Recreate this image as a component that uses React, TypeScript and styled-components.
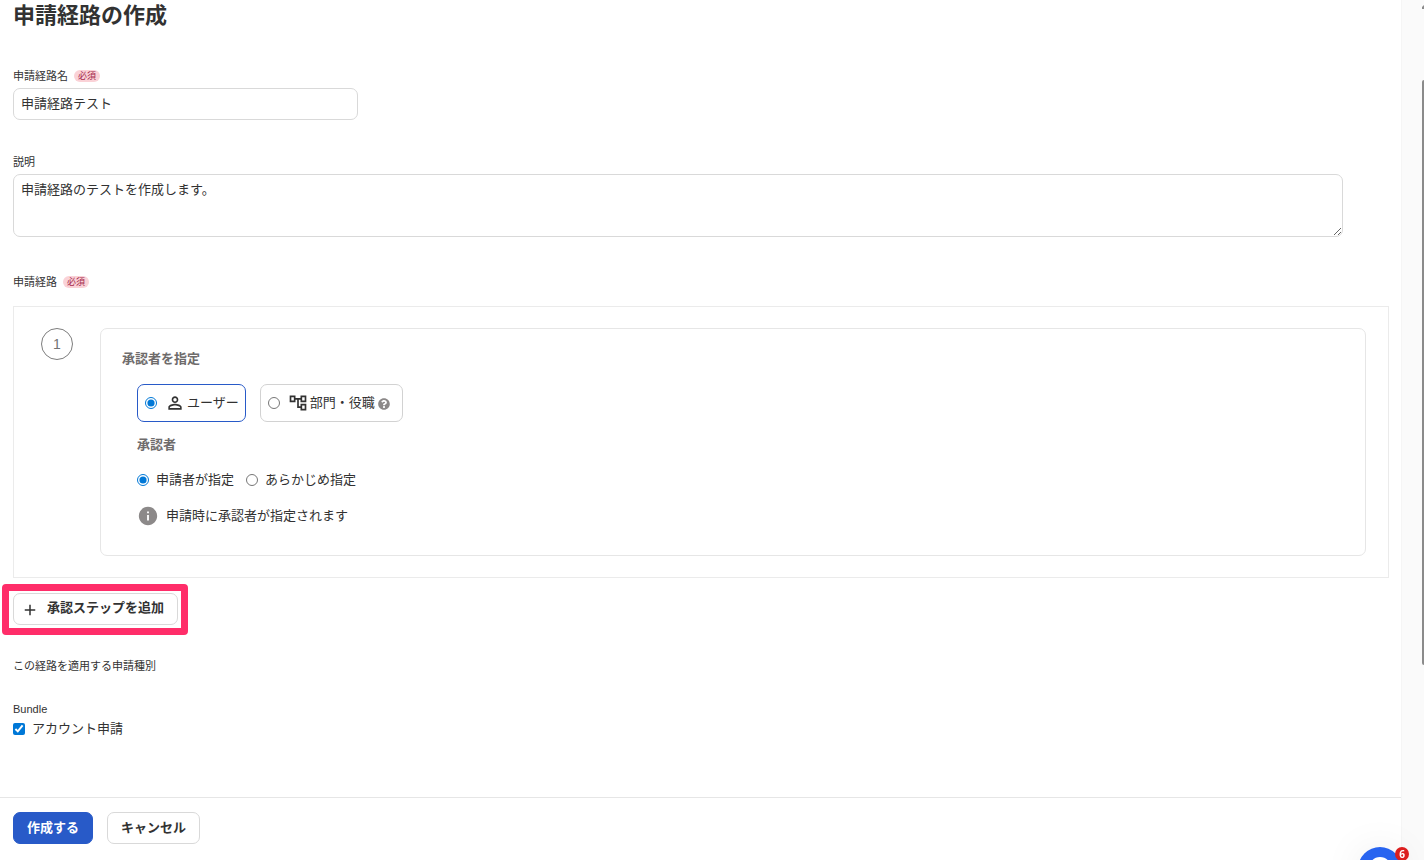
import React, { useState } from "react";
import styled, { createGlobalStyle } from "styled-components";
import { MdAdd, MdInfo, MdOutlineAccountTree, MdPersonOutline } from "react-icons/md";
import { FaQuestionCircle } from "react-icons/fa";

const GlobalStyle = createGlobalStyle`
  * { box-sizing: border-box; }
  body {
    margin: 0;
    background: #ffffff;
    color: #323232;
    font-family: "Liberation Sans", "Noto Sans CJK JP", sans-serif;
    font-size: 13px;
    line-height: 20px;
  }
  button, input, textarea { font: inherit; color: inherit; }
`;

const Page = styled.div`
  display: flex;
  min-height: 100vh;
`;

const Column = styled.div`
  flex: 1;
  min-width: 0;
  display: flex;
  flex-direction: column;
`;

const Form = styled.form`
  flex: 1;
  display: flex;
  flex-direction: column;
`;

const Content = styled.main`
  flex: 1;
  padding: 0 12px 0 13px;
`;

const Title = styled.h1`
  margin: 0 0 36px;
  font-size: 22px;
  line-height: 32px;
  font-weight: 700;
`;

const Field = styled.div<{ $gap: number }>`
  display: flex;
  flex-direction: column;
  align-items: flex-start;
  margin-bottom: ${(p) => p.$gap}px;
`;

const LabelRow = styled.div`
  display: flex;
  align-items: center;
  gap: 6px;
  height: 16px;
  margin-bottom: 4px;
  font-size: 11px;
  line-height: 16px;
`;

const Required = styled.span`
  height: 12px;
  padding: 0 4px;
  border-radius: 6px;
  background: #fad2d7;
  color: #a5284b;
  font-size: 9px;
  line-height: 12px;
`;

const TextInput = styled.input`
  width: 345px;
  max-width: 100%;
  height: 32px;
  padding: 0 7px 4px;
  border: 1px solid #d9d9d9;
  border-radius: 7px;
  background: #ffffff;
  outline: none;
`;

const TextArea = styled.textarea`
  display: block;
  width: calc(100% - 46px);
  height: 63px;
  padding: 5px 7px;
  border: 1px solid #d9d9d9;
  border-radius: 7px;
  background: #ffffff;
  resize: vertical;
  outline: none;
`;

const Steps = styled.ol`
  margin: 16px 0 15px;
  padding: 21px 22px 21px 27px;
  border: 1px solid #ebebeb;
  list-style: none;
`;

const Step = styled.li`
  display: flex;
  align-items: flex-start;
  gap: 27px;
`;

const StepNumber = styled.span`
  flex: none;
  width: 32px;
  height: 32px;
  border: 1px solid #7d7d7d;
  border-radius: 50%;
  color: #737373;
  font-size: 14px;
  line-height: 30px;
  text-align: center;
`;

const StepCard = styled.div`
  flex: 1;
  padding: 20px 21px 28px;
  border: 1px solid #e6e6e6;
  border-radius: 7px;
`;

const CardHeading = styled.h2`
  margin: 0;
  color: #6e6b6b;
  font-size: 13px;
  line-height: 20px;
  font-weight: 700;
`;

const CardBody = styled.div`
  padding: 15px 0 0 15px;
`;

const Options = styled.div`
  display: flex;
  gap: 14px;
  margin-bottom: 13px;
`;

const Option = styled.label<{ $selected: boolean }>`
  display: flex;
  align-items: center;
  height: 38px;
  padding: 0 6px 0 7px;
  border: 1px solid ${(p) => (p.$selected ? "#285ac8" : "#d2d2d2")};
  border-radius: 7px;
`;

const OptionIcon = styled.span`
  display: flex;
  margin: 0 2px 0 8px;
  font-size: 20px;
`;

const HelpIcon = styled.span`
  display: flex;
  margin: 2px 6px 0 3px;
  color: #8c8989;
  font-size: 12px;
`;

const Radio = styled.input.attrs({ type: "radio" })`
  width: 12px;
  height: 12px;
  margin: 0;
  accent-color: #0078d7;
`;

const Choices = styled.div`
  display: flex;
  gap: 12px;
  margin: 15px 0;
`;

const Choice = styled.label`
  display: flex;
  align-items: center;
  gap: 7px;
`;

const Note = styled.p`
  display: flex;
  align-items: center;
  gap: 7px;
  margin: 0;
  color: #323232;

  svg { color: #8c8989; }
`;

const AddStep = styled.div`
  position: relative;
  width: fit-content;
  margin-bottom: 33px;
`;

const Highlight = styled.span`
  position: absolute;
  inset: -9px -10px -10px -11px;
  border: 7px solid #ff2d69;
  border-radius: 4px;
  pointer-events: none;
`;

const Button = styled.button<{ $primary?: boolean }>`
  display: flex;
  align-items: center;
  gap: 8px;
  height: 32px;
  padding: 0 13px 1px;
  border: 1px solid ${(p) => (p.$primary ? "#285ac8" : "#d9d9d9")};
  border-radius: 7px;
  background: ${(p) => (p.$primary ? "#285ac8" : "#ffffff")};
  color: ${(p) => (p.$primary ? "#ffffff" : "#323232")};
  font-weight: 700;
`;

const AddButton = styled(Button)`
  padding: 0 13px 2px 7px;

  svg { margin-top: 4px; }
`;

const GroupName = styled.div`
  margin-top: 27px;
  font-size: 11px;
  line-height: 16px;
`;

const Check = styled.label`
  display: flex;
  align-items: center;
  gap: 7px;
  margin-top: 2px;

  input {
    width: 12px;
    height: 12px;
    margin: 0;
    accent-color: #0078d7;
  }
`;

const Footer = styled.footer`
  display: flex;
  gap: 14px;
  padding: 14px 13px 16px;
  border-top: 1px solid #e6e6e6;
`;

const Gutter = styled.aside`
  flex: none;
  display: flex;
  flex-direction: column;
  align-items: flex-end;
  width: 23px;
  padding-top: 5px;
  border-left: 1px solid #f5f5f5;
  background: #fafafa;
`;

const ScrollThumb = styled.div`
  width: 2px;
  height: 68vh;
  margin-top: 71px;
  border-top-left-radius: 2px;
  border-bottom-left-radius: 2px;
  background: #8b8b8b;
`;

const ChatArea = styled.div`
  position: fixed;
  right: 0;
  bottom: 0;
  width: 140px;
  height: 80px;
  overflow: hidden;
  pointer-events: none;
`;

const ChatButton = styled.button`
  position: absolute;
  right: 22px;
  top: 67px;
  width: 44px;
  height: 44px;
  padding: 0;
  border: 0;
  border-radius: 50%;
  background: #2864f0;
  box-shadow: 0 2px 40px rgba(0, 0, 0, 0.08);
  pointer-events: auto;
`;

const ChatCount = styled.span`
  position: absolute;
  right: 15px;
  top: 67px;
  width: 14px;
  height: 14px;
  border-radius: 50%;
  background: #dc1e1e;
  color: #ffffff;
  font-family: "Open Sans", sans-serif;
  font-size: 10px;
  line-height: 14px;
  font-weight: 700;
  text-align: center;
`;

export default function App() {
  const [name, setName] = useState("申請経路テスト");
  const [description, setDescription] = useState("申請経路のテストを作成します。");
  const [kind, setKind] = useState("user");
  const [approver, setApprover] = useState("applicant");

  return (
    <>
      <GlobalStyle />
      <Page>
        <Column>
          <Form onSubmit={(e) => e.preventDefault()}>
            <Content>
              <Title>申請経路の作成</Title>

              <Field $gap={34}>
                <LabelRow>
                  <label htmlFor="route-name">申請経路名</label>
                  <Required>必須</Required>
                </LabelRow>
                <TextInput id="route-name" value={name} onChange={(e) => setName(e.target.value)} />
              </Field>

              <Field $gap={37}>
                <LabelRow>
                  <label htmlFor="route-description">説明</label>
                </LabelRow>
                <TextArea
                  id="route-description"
                  value={description}
                  onChange={(e) => setDescription(e.target.value)}
                />
              </Field>

              <LabelRow>
                <span>申請経路</span>
                <Required>必須</Required>
              </LabelRow>
              <Steps>
                <Step>
                  <StepNumber>1</StepNumber>
                  <StepCard>
                    <CardHeading>承認者を指定</CardHeading>
                    <CardBody>
                      <Options>
                        <Option $selected={kind === "user"}>
                          <Radio name="kind" checked={kind === "user"} onChange={() => setKind("user")} />
                          <OptionIcon>
                            <MdPersonOutline />
                          </OptionIcon>
                          ユーザー
                        </Option>
                        <Option $selected={kind === "group"}>
                          <Radio name="kind" checked={kind === "group"} onChange={() => setKind("group")} />
                          <OptionIcon>
                            <MdOutlineAccountTree />
                          </OptionIcon>
                          部門・役職
                          <HelpIcon>
                            <FaQuestionCircle />
                          </HelpIcon>
                        </Option>
                      </Options>
                      <CardHeading>承認者</CardHeading>
                      <Choices>
                        <Choice>
                          <Radio
                            name="approver"
                            checked={approver === "applicant"}
                            onChange={() => setApprover("applicant")}
                          />
                          申請者が指定
                        </Choice>
                        <Choice>
                          <Radio
                            name="approver"
                            checked={approver === "preset"}
                            onChange={() => setApprover("preset")}
                          />
                          あらかじめ指定
                        </Choice>
                      </Choices>
                      <Note>
                        <MdInfo size={22} />
                        申請時に承認者が指定されます
                      </Note>
                    </CardBody>
                  </StepCard>
                </Step>
              </Steps>

              <AddStep>
                <AddButton type="button">
                  <MdAdd size={18} />
                  承認ステップを追加
                </AddButton>
                <Highlight />
              </AddStep>

              <LabelRow>この経路を適用する申請種別</LabelRow>
              <GroupName>Bundle</GroupName>
              <Check>
                <input type="checkbox" defaultChecked />
                アカウント申請
              </Check>
            </Content>

            <Footer>
              <Button $primary type="submit">
                作成する
              </Button>
              <Button type="button">キャンセル</Button>
            </Footer>
          </Form>
        </Column>

        <Gutter>
          <svg width="2" height="4" viewBox="0 0 2 4">
            <path d="M2 0 L0 2 V4 H2 Z" fill="#8b8b8b" />
          </svg>
          <ScrollThumb />
        </Gutter>
      </Page>

      <ChatArea>
        <ChatButton type="button" aria-label="チャット">
          <svg width="44" height="44" viewBox="0 0 48 48">
            <path
              d="M24 11 C31 11 36 16 36 23 C36 30 31 35 24 35 L14 37 L14 30 C9 22 14 11 24 11 Z"
              fill="#ffffff"
            />
          </svg>
        </ChatButton>
        <ChatCount>6</ChatCount>
      </ChatArea>
    </>
  );
}
